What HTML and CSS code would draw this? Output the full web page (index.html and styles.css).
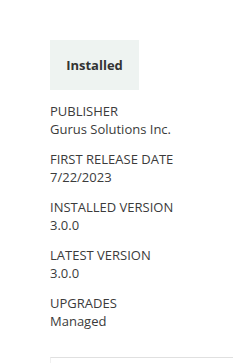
FILE: index.html
```html
<!DOCTYPE html>
<html lang="en">
<head>
    <meta charset="UTF-8">
    <meta name="viewport" content="width=device-width, initial-scale=1.0">
    <title>App details</title>
    <link rel="stylesheet" href="styles.css">
</head>
<body>
    <div class="sidebar">
        <div class="status">Installed</div>
        <dl class="facts">
            <div class="fact">
                <dt>PUBLISHER</dt>
                <dd>Gurus Solutions Inc.</dd>
            </div>
            <div class="fact">
                <dt>FIRST RELEASE DATE</dt>
                <dd>7/22/2023</dd>
            </div>
            <div class="fact">
                <dt>INSTALLED VERSION</dt>
                <dd>3.0.0</dd>
            </div>
            <div class="fact">
                <dt>LATEST VERSION</dt>
                <dd>3.0.0</dd>
            </div>
            <div class="fact">
                <dt>UPGRADES</dt>
                <dd>Managed</dd>
            </div>
        </dl>
        <div class="panel"></div>
    </div>
</body>
</html>
```

FILE: styles.css
```css
body {
    margin: 0;
    background: #fff;
    font-family: 'Open Sans', Arial, sans-serif;
    color: #3b3b3b;
    overflow: hidden;
}
.sidebar {
    padding: 40px 0 0 50px;
}
.status {
    width: 89px;
    height: 50px;
    background-color: #eef3f1;
    display: flex;
    align-items: center;
    justify-content: center;
    font-size: 13px;
    font-weight: bold;
    color: #333;
}
.facts {
    margin: 12px 0 0;
}
.fact {
    margin-bottom: 12px;
    font-size: 13px;
    line-height: 18px;
}
.fact dt {
    text-transform: uppercase;
}
.fact dd {
    margin: 0;
}
.panel {
    margin-top: 27px;
    height: 20px;
    border-top: 1px solid #e0e0e0;
    border-left: 1px solid #f0f0f0;
}
```
